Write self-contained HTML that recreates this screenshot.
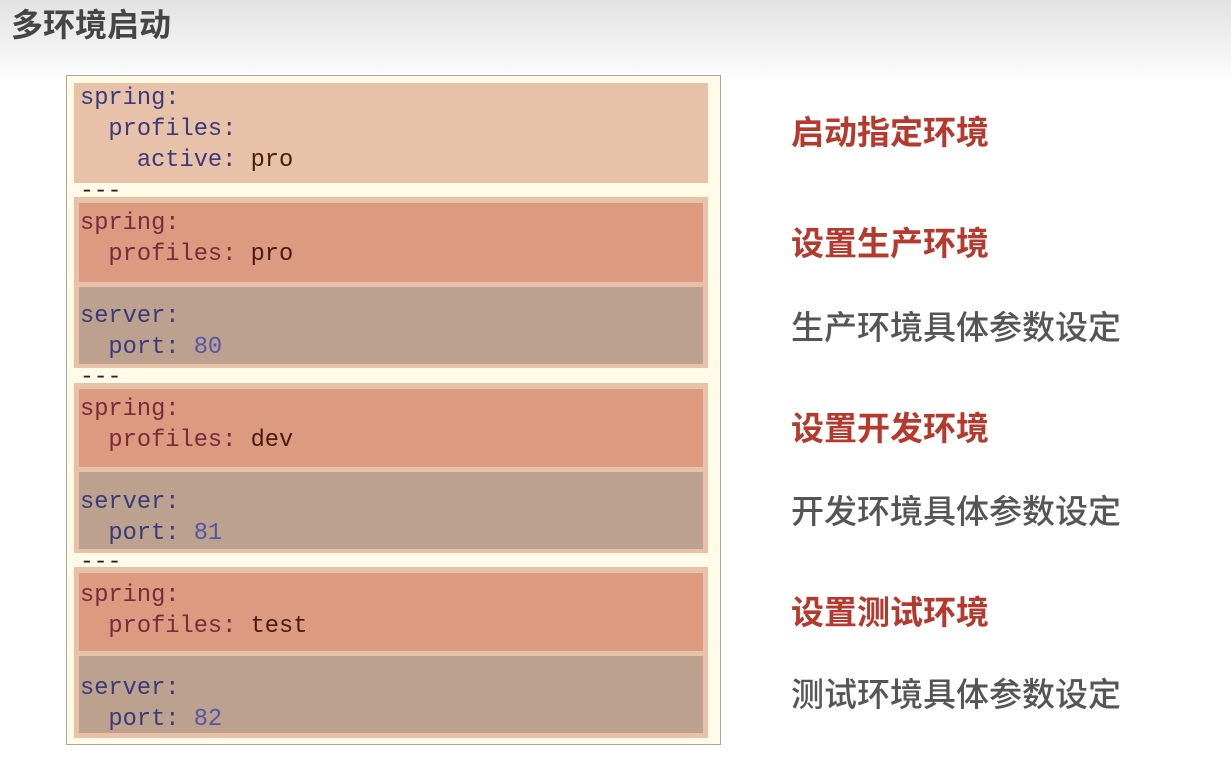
<!DOCTYPE html>
<html><head><meta charset="utf-8"><style>
body{margin:0;width:1231px;height:760px;background:#fff;position:relative;overflow:hidden;font-family:"Liberation Sans","Noto Sans CJK SC",sans-serif}
.hdr{position:absolute;left:0;top:0;width:1231px;height:78px;background:linear-gradient(#e2e2e2,#f4f4f4 70%,#fdfdfd)}
.title{position:absolute;left:11px;top:5px;font-size:32px;font-weight:bold;color:#454545;line-height:40px}
.box{position:absolute;left:66px;top:75px;width:655px;height:670px;background:#fffbe6;border:1px solid #a8a8a0;box-sizing:border-box}
.b{position:absolute;box-sizing:border-box}
.code{position:absolute;font-family:"Liberation Mono",monospace;font-size:23.7px;line-height:31px;white-space:pre;color:#3a3a7a}
.v{color:#4a1a10}.n{color:#5555a8}.k2{color:#7a2a3a}
.lab{position:absolute;left:791px;font-size:33px;line-height:40px;white-space:nowrap}
.r{color:#b53a2d;font-weight:bold}.g{color:#555;font-weight:500}
.dash{position:absolute;left:80px;font-family:"Liberation Mono",monospace;font-size:23px;line-height:20px;color:#222}
</style></head><body>
<div class="hdr"></div>
<div class="title">多环境启动</div>
<div class="box"></div>
<div class="b" style="left:74px;top:83px;width:634px;height:100px;background:#e8c1a9"></div>
<div class="code" style="left:80px;top:83px">spring:
  profiles:
    active: <span class="v">pro</span></div>
<div class="dash" style="top:181px">---</div>

<div class="b" style="left:74px;top:197px;width:634px;height:171px;background:#e8c1a9"></div>
<div class="b" style="left:79px;top:203px;width:624px;height:79px;background:#dc9a80"></div>
<div class="b" style="left:79px;top:287px;width:624px;height:77px;background:#bca18f"></div>
<div class="code k2" style="left:80px;top:208px">spring:
  profiles: <span class="v">pro</span></div>
<div class="code" style="left:80px;top:301px">server:
  port: <span class="n">80</span></div>
<div class="dash" style="top:367px">---</div>

<div class="b" style="left:74px;top:383px;width:634px;height:170px;background:#e8c1a9"></div>
<div class="b" style="left:79px;top:389px;width:624px;height:78px;background:#dc9a80"></div>
<div class="b" style="left:79px;top:472px;width:624px;height:77px;background:#bca18f"></div>
<div class="code k2" style="left:80px;top:394px">spring:
  profiles: <span class="v">dev</span></div>
<div class="code" style="left:80px;top:487px">server:
  port: <span class="n">81</span></div>
<div class="dash" style="top:552px">---</div>

<div class="b" style="left:74px;top:567px;width:634px;height:171px;background:#e8c1a9"></div>
<div class="b" style="left:79px;top:573px;width:624px;height:78px;background:#dc9a80"></div>
<div class="b" style="left:79px;top:656px;width:624px;height:77px;background:#bca18f"></div>
<div class="code k2" style="left:80px;top:580px">spring:
  profiles: <span class="v">test</span></div>
<div class="code" style="left:80px;top:673px">server:
  port: <span class="n">82</span></div>

<div class="lab r" style="top:113px">启动指定环境</div>
<div class="lab r" style="top:224px">设置生产环境</div>
<div class="lab g" style="top:308px">生产环境具体参数设定</div>
<div class="lab r" style="top:409px">设置开发环境</div>
<div class="lab g" style="top:492px">开发环境具体参数设定</div>
<div class="lab r" style="top:593px">设置测试环境</div>
<div class="lab g" style="top:675px">测试环境具体参数设定</div>
</body></html>
